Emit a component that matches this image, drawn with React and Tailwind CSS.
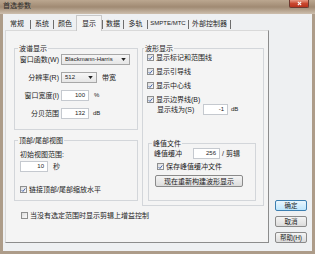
import React from "react";

function Check({ checked }) {
  return (
    <span className="w-[7px] h-[7px] border border-[#8e8f8f] bg-gradient-to-br from-[#dcdcdc] to-[#fbfbfb] flex items-center justify-center shrink-0">
      {checked && (
        <svg viewBox="0 0 8 8" className="w-[6px] h-[6px]">
          <path d="M1 4.2 L3.1 6.3 L7 1.4" stroke="#3b5da8" strokeWidth="1.5" fill="none" />
        </svg>
      )}
    </span>
  );
}

function CheckRow({ checked, children, className = "" }) {
  return (
    <div className={"flex items-center h-[9px] gap-[2px] " + className}>
      <Check checked={checked} />
      <span className="whitespace-nowrap">{children}</span>
    </div>
  );
}

function Field({ value, w }) {
  return (
    <div
      className={
        "h-[11px] bg-white border border-[#c5c9cf] flex items-center justify-end pr-[3px] text-[6px] " + w
      }
    >
      {value}
    </div>
  );
}

function Combo({ value, w }) {
  return (
    <div
      className={
        "h-[11px] bg-gradient-to-b from-[#f6f6f6] to-[#e6e6e6] border border-[#a7a7a7] flex items-center pl-[3px] pr-[3px] text-[6px] " +
        w
      }
    >
      <span className="flex-1 whitespace-nowrap overflow-hidden">{value}</span>
      <svg viewBox="0 0 6 4" className="w-[5px] h-[3px]">
        <path d="M0 0 L6 0 L3 4 Z" fill="#222" />
      </svg>
    </div>
  );
}

function Group({ label, className = "", labelLeft = "left-[3px]", children }) {
  return (
    <div className={"relative border border-[#d3d6da] " + className}>
      <span
        className={
          "absolute top-[-5px] bg-[#f4f4f4] px-[1px] leading-[9px] whitespace-nowrap " + labelLeft
        }
      >
        {label}
      </span>
      {children}
    </div>
  );
}

function Btn({ children, def, className = "" }) {
  return (
    <div
      className={
        "h-[11px] flex items-center justify-center rounded-[2px] border text-[6.5px] whitespace-nowrap " +
        (def
          ? "border-[#3c7fb1] bg-gradient-to-b from-[#eaf6fd] to-[#bee6fd]"
          : "border-[#8a8a8a] bg-gradient-to-b from-[#f4f4f4] to-[#dcdcdc]") +
        " " +
        className
      }
    >
      {children}
    </div>
  );
}

const tabs = [
  ["常规", "w-[26px]", true],
  ["系统", "w-[22px]", true],
  ["颜色", "w-[22px]", false],
  ["显示", "w-[26px]", true],
  ["数据", "w-[20px]", true],
  ["多轨", "w-[23px]", true],
  ["SMPTE/MTC", "w-[40px]", true],
  ["外部控制器", "w-[41px]", true],
];

export default function App() {
  return (
    <div className="w-[315px] h-[254px] flex flex-col bg-[#ad9c89] font-['Liberation_Sans','Noto_Sans_CJK_SC',sans-serif] text-[#1c1c1c] text-[7px] leading-[9px] overflow-hidden">
      {/* title bar */}
      <div className="h-[14px] flex items-start bg-gradient-to-b from-[#bba790] via-[#a08a73] to-[#cdbfae] shrink-0">
        <span className="ml-[3px] mt-[1px] text-[7px] text-[#2a2a2a]">首选参数</span>
        <div className="ml-auto mr-[6px] w-[20px] h-[8px] rounded-b-[2px] border border-t-0 border-[#6e3a30] bg-gradient-to-b from-[#e79a85] via-[#c9472f] to-[#b8321d] flex items-center justify-center">
          <svg viewBox="0 0 6 6" className="w-[5px] h-[5px]">
            <path d="M1 1 L5 5 M5 1 L1 5" stroke="#fff" strokeWidth="1.3" />
          </svg>
        </div>
      </div>

      {/* dialog body */}
      <div className="flex-1 mx-[3px] mb-[3px] bg-[#eef0f2] flex flex-col">
        {/* tabs */}
        <div className="h-[16px] flex items-end pl-[1px] shrink-0">
          {tabs.map(([t, w, sep], i) => (
            <React.Fragment key={i}>
              {t === "显示" ? (
                <div
                  className={
                    "h-[16px] -mb-px flex items-center justify-center bg-[#f4f4f4] border border-b-0 border-[#c8c8c8] relative z-10 " +
                    w
                  }
                >
                  {t}
                </div>
              ) : (
                <div className={"h-[13px] flex items-center justify-center whitespace-nowrap " + w}>
                  {t === "SMPTE/MTC" ? <span className="text-[6px]">{t}</span> : t}
                </div>
              )}
              {sep && <div className="w-px h-[9px] mb-[1px] bg-[#6d6d6d]" />}
            </React.Fragment>
          ))}
        </div>

        <div className="flex flex-1">
          {/* tab panel */}
          <div className="w-[264px] h-[213px] ml-[2px] border border-t-[#d9d9d9] border-l-[#d9d9d9] border-r-[#8c8c8c] border-b-[#8c8c8c] bg-[#f4f4f4] flex">
            {/* left column */}
            <div className="ml-[8px] w-[124px] flex flex-col">
              <Group label="波谱显示" className="mt-[17px] h-[82px]">
                <div className="pt-[5px] flex flex-col gap-[7px]">
                  <div className="flex items-center h-[11px]">
                    <span className="w-[44px] text-right whitespace-nowrap">窗口函数(W)</span>
                    <div className="ml-[2px]">
                      <Combo value="Blackmann-Harris" w="w-[69px]" />
                    </div>
                  </div>
                  <div className="flex items-center h-[11px]">
                    <span className="w-[44px] text-right whitespace-nowrap">分辨率(R)</span>
                    <div className="ml-[2px]">
                      <Combo value="512" w="w-[36px]" />
                    </div>
                    <span className="ml-[5px]">带宽</span>
                  </div>
                  <div className="flex items-center h-[11px]">
                    <span className="w-[44px] text-right whitespace-nowrap">窗口宽度(I)</span>
                    <div className="ml-[2px]">
                      <Field value="100" w="w-[28px]" />
                    </div>
                    <span className="ml-[5px] text-[6px]">%</span>
                  </div>
                  <div className="flex items-center h-[11px]">
                    <span className="w-[44px] text-right whitespace-nowrap">分贝范围</span>
                    <div className="ml-[2px]">
                      <Field value="132" w="w-[28px]" />
                    </div>
                    <span className="ml-[4px] text-[6px]">dB</span>
                  </div>
                </div>
              </Group>

              <Group label="顶部/尾部视图" className="mt-[10px] h-[61px]">
                <div className="pt-[9px] pl-[5px] flex flex-col">
                  <span className="whitespace-nowrap">初始视图范围:</span>
                  <div className="mt-[2px] flex items-center">
                    <Field value="10" w="w-[28px]" />
                    <span className="ml-[5px]">秒</span>
                  </div>
                  <CheckRow checked className="mt-[13px]">
                    链接顶部/尾部缩放水平
                  </CheckRow>
                </div>
              </Group>

              <CheckRow className="mt-[10px] ml-[7px]">当没有选定范围时显示剪辑上增益控制</CheckRow>
            </div>

            {/* right column */}
            <div className="ml-[4px] w-[122px] flex flex-col">
              <Group label="波形显示" className="mt-[17px] h-[158px]" labelLeft="left-[1px]">
                <div className="pt-[4px] flex flex-col">
                  <div className="pl-[4px] flex flex-col gap-[5px]">
                    <CheckRow checked>显示标记和范围线</CheckRow>
                    <CheckRow checked>显示引导线</CheckRow>
                    <CheckRow checked>显示中心线</CheckRow>
                    <CheckRow checked>显示边界线(B)</CheckRow>
                  </div>
                  <div className="pl-[14px] flex items-center h-[11px]">
                    <span className="w-[46px] whitespace-nowrap">显示线为(S)</span>
                    <Field value="-1" w="w-[25px]" />
                    <span className="ml-[3px] text-[6px]">dB</span>
                  </div>

                  <Group label="峰值文件" className="mt-[28px] ml-[5px] w-[108px] h-[58px]">
                    <div className="pt-[4px] flex flex-col">
                      <div className="pl-[5px] flex items-center h-[11px]">
                        <span className="w-[39px] whitespace-nowrap">峰值缓冲</span>
                        <Field value="256" w="w-[27px]" />
                        <span className="ml-[2px]">/ 剪辑</span>
                      </div>
                      <CheckRow checked className="mt-[3px] ml-[8px]">
                        保存峰值缓冲文件
                      </CheckRow>
                      <Btn className="mt-[4px] ml-[6px] w-[88px] !h-[12px] !text-[7px]">现在重新构建波形显示</Btn>
                    </div>
                  </Group>
                </div>
              </Group>
            </div>
          </div>

          {/* buttons */}
          <div className="ml-[6px] w-[32px] flex flex-col justify-end gap-[5px] pb-[8px]">
            <Btn def>确定</Btn>
            <Btn>取消</Btn>
            <Btn>帮助(H)</Btn>
          </div>
        </div>
      </div>
    </div>
  );
}
